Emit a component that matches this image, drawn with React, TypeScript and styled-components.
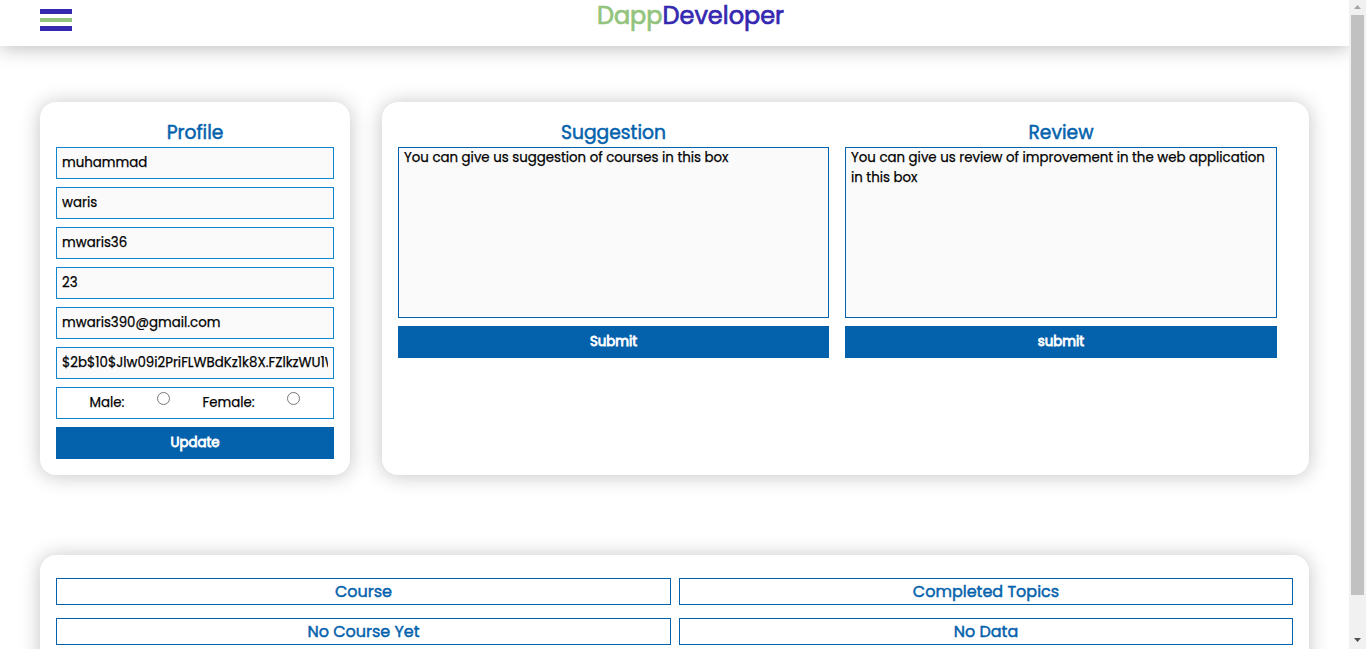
import React from "react";
import styled, { createGlobalStyle } from "styled-components";

const GlobalStyle = createGlobalStyle`
  *, *::before, *::after { box-sizing: border-box; margin: 0; padding: 0; }
  html, body { height: 100%; overflow: hidden; background: #fff; }
  body, input, textarea, button {
    font-family: Poppins, Inter, "Open Sans", sans-serif;
  }
`;

const blue = "#0462ad";
const shadow = "0 1px 20px rgba(0, 0, 0, 0.24)";

const Window = styled.div`
  display: flex;
  width: 100%;
  height: 649px;
  overflow: hidden;
`;

const Page = styled.div`
  flex: 1;
  min-width: 0;
  height: 649px;
  overflow: hidden;
`;

const Header = styled.header`
  display: grid;
  grid-template-columns: 1fr auto 1fr;
  height: 46px;
  padding: 0 40px;
  background: #fff;
  box-shadow: 0 2px 20px rgba(0, 0, 0, 0.27);
`;

const Burger = styled.button`
  display: flex;
  flex-direction: column;
  gap: 4px;
  width: 32px;
  margin-top: 9px;
  border: 0;
  background: none;
`;

const Bar = styled.span<{ $green?: boolean }>`
  height: ${(p) => (p.$green ? 4 : 5)}px;
  width: 32px;
  background: ${(p) => (p.$green ? "#92c47d" : "#3528b0")};
`;

const Logo = styled.h1`
  margin-left: 32px;
  font-size: 24px;
  line-height: 32px;
  font-weight: 400;
  -webkit-text-stroke: 0.7px currentColor;
  color: #3528b0;
  span { color: #92c47d; }
`;

const Main = styled.main`
  display: grid;
  grid-template-columns: 310px 1fr;
  column-gap: 32px;
  row-gap: 80px;
  padding: 56px 40px 0;
`;

const Card = styled.section<{ $wide?: boolean }>`
  grid-column: ${(p) => (p.$wide ? "1 / -1" : "auto")};
  height: 373px;
  padding: ${(p) => (p.$wide ? "23px 16px" : "16px")};
  border-radius: 16px;
  background: #fff;
  box-shadow: ${shadow};
`;

const Title = styled.h2`
  height: 29px;
  line-height: 29px;
  font-size: 18.72px;
  font-weight: 400;
  -webkit-text-stroke: 0.5px currentColor;
  text-align: center;
  color: ${blue};
`;

const Form = styled.form`
  display: flex;
  flex-direction: column;
  gap: 8px;
`;

const Field = styled.input`
  width: 100%;
  height: 32px;
  padding: 0 5px;
  border: 1px solid #0d86ce;
  background: #fafafa;
  font-size: 13.33px;
  font-weight: 400;
  -webkit-text-stroke: 0.25px currentColor;
  color: #000;
`;

const Gender = styled.div`
  display: grid;
  grid-template-columns: 100px 13px 117px 13px;
  height: 32px;
  border: 1px solid #0d86ce;
  font-size: 13.33px;
  -webkit-text-stroke: 0.25px currentColor;
  line-height: 29px;
  text-align: center;
  input { width: 13px; height: 13px; margin-top: 4px; }
`;

const Submit = styled.button`
  height: 32px;
  padding-bottom: 1px;
  border: 0;
  background: ${blue};
  color: #fff;
  font-size: 13.33px;
  font-weight: 400;
  -webkit-text-stroke: 0.8px currentColor;
`;

const Feedback = styled.div`
  display: grid;
  grid-template-columns: 431px 432px;
  column-gap: 16px;
`;

const Area = styled.textarea`
  height: 171px;
  padding: 0 5px;
  border: 1px solid ${blue};
  background: #fafafa;
  color: #000;
  font-size: 13.33px;
  font-weight: 400;
  -webkit-text-stroke: 0.25px currentColor;
  line-height: 20px;
  resize: none;
`;

const Table = styled.div`
  display: grid;
  grid-template-columns: 615px 614px;
  gap: 13px 8px;
`;

const Cell = styled.div`
  height: 27px;
  border: 1px solid ${blue};
  font-size: 16px;
  font-weight: 400;
  -webkit-text-stroke: 0.45px currentColor;
  line-height: 25px;
  text-align: center;
  color: ${blue};
`;

const Scrollbar = styled.div`
  display: flex;
  flex-direction: column;
  align-items: center;
  width: 17px;
  background: #f1f1f1;
  z-index: 1;
`;

const Arrow = styled.svg`
  width: 17px;
  height: 15px;
  flex: none;
`;

const Thumb = styled.div`
  width: 13px;
  height: 580px;
  margin-bottom: auto;
  background: #c1c1c1;
`;

const fields = [
  "muhammad",
  "waris",
  "mwaris36",
  "23",
  "mwaris390@gmail.com",
  "$2b$10$Jlw09i2PriFLWBdKz1k8X.FZlkzWU1WqT7e",
];

export default function App() {
  return (
    <Window>
      <GlobalStyle />
      <Page>
        <Header>
          <Burger aria-label="Menu">
            <Bar />
            <Bar $green />
            <Bar />
          </Burger>
          <Logo><span>Dapp</span>Developer</Logo>
        </Header>
        <Main>
          <Card>
            <Title>Profile</Title>
            <Form>
              {fields.map((value) => (
                <Field key={value} defaultValue={value} />
              ))}
              <Gender>
                <label htmlFor="male">Male:</label>
                <input id="male" type="radio" name="gender" />
                <label htmlFor="female">Female:</label>
                <input id="female" type="radio" name="gender" />
              </Gender>
              <Submit type="button">Update</Submit>
            </Form>
          </Card>
          <Card>
            <Feedback>
              <div>
                <Title>Suggestion</Title>
                <Form>
                  <Area defaultValue="You can give us suggestion of courses in this box" />
                  <Submit type="button">Submit</Submit>
                </Form>
              </div>
              <div>
                <Title>Review</Title>
                <Form>
                  <Area defaultValue="You can give us review of improvement in the web application in this box" />
                  <Submit type="button">submit</Submit>
                </Form>
              </div>
            </Feedback>
          </Card>
          <Card $wide>
            <Table>
              <Cell>Course</Cell>
              <Cell>Completed Topics</Cell>
              <Cell>No Course Yet</Cell>
              <Cell>No Data</Cell>
            </Table>
          </Card>
        </Main>
      </Page>
      <Scrollbar>
        <Arrow viewBox="0 0 17 15"><path d="M5 9h7L8.5 5z" fill="#a3a3a3" /></Arrow>
        <Thumb />
        <Arrow viewBox="0 0 17 15"><path d="M5 4h7L8.5 8z" fill="#505050" /></Arrow>
      </Scrollbar>
    </Window>
  );
}
